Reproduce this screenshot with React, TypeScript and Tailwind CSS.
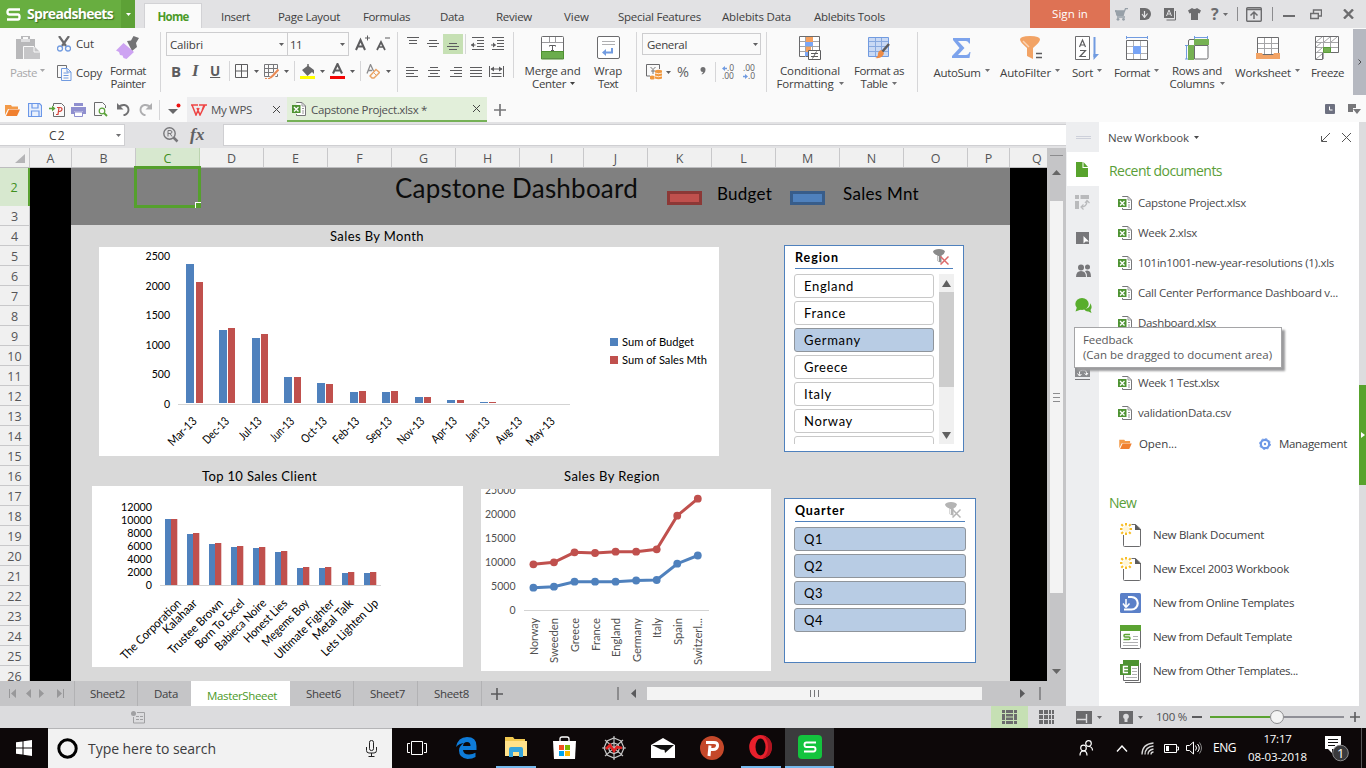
import { useLayoutEffect, useRef } from "react";
import type { ReactNode } from "react";

/* Text that spreads its letters so that the run is exactly w pixels wide. */
function T({ w, className = "", children }: { w: number; className?: string; children: string }) {
  const ref = useRef<HTMLSpanElement>(null);
  useLayoutEffect(() => {
    const el = ref.current;
    if (!el) return;
    el.style.letterSpacing = "0px";
    const natural = el.getBoundingClientRect().width;
    el.style.letterSpacing = `${(w - natural) / children.length}px`;
  }, [w, children]);
  return (
    <span ref={ref} className={`inline-block shrink-0 whitespace-pre ${className}`}>
      {children}
    </span>
  );
}

function S({ w, h, className = "", children }: { w: number; h: number; className?: string; children: ReactNode }) {
  return (
    <svg width={w} height={h} viewBox={`0 0 ${w} ${h}`} fill="none" className={`block shrink-0 ${className}`}>
      {children}
    </svg>
  );
}

const Caret = ({ className = "" }: { className?: string }) => (
  <S w={5} h={3} className={className}>
    <path d="M0 0h5L2.5 3z" fill="currentColor" />
  </S>
);

const Rule = ({ className = "" }: { className?: string }) => <div className={`w-px shrink-0 bg-[#d6d6d8] ${className}`} />;

/* ---------- title bar ---------- */

const menuTabs: [string, number, string][] = [
  ["Insert", 29, "ml-[19px]"],
  ["Page Layout", 62, "ml-[28px]"],
  ["Formulas", 47, "ml-[23px]"],
  ["Data", 24, "ml-[30px]"],
  ["Review", 36, "ml-[32px]"],
  ["View", 25, "ml-[32px]"],
  ["Special Features", 83, "ml-[29px]"],
  ["Ablebits Data", 69, "ml-[21px]"],
  ["Ablebits Tools", 71, "ml-[23px]"],
];

function TitleBar() {
  return (
    <div className="flex h-7 shrink-0 bg-[#e2e2e4] text-[11.5px] text-[#404040]">
      <div className="flex h-7 w-[121px] items-center bg-[#68ae40]">
        <S w={15} h={13} className="ml-[6px]">
          <path d="M14 1.5H3.500Q1.500 1.500 1.500 4T3.500 6.500H12Q13.500 6.500 13.500 9T12 11.500H1" stroke="#fff" strokeWidth="2.400" />
        </S>
        <T w={86} className="ml-[6px] text-[14px] leading-[28px] font-bold text-white [text-shadow:1px_1px_1px_#3c6d22]">Spreadsheets</T>
      </div>
      <div className="flex h-7 w-[14px] items-center justify-center bg-[#5da136] text-white">
        <Caret />
      </div>
      <div className="mt-[3px] ml-[9px] flex h-[25px] w-[58px] justify-center border border-b-0 border-[#d2d2d5] bg-[#fafafa]">
        <T w={31} className="text-[11.5px] leading-[26px] font-bold text-[#4b9a28]">Home</T>
      </div>
      {menuTabs.map(([name, w, gap]) => (
        <div key={name} className={`${gap} pt-[3px]`}>
          <T w={w} className="leading-[28px]">{name}</T>
        </div>
      ))}
      <div className="ml-[145px] flex h-7 w-[80px] justify-center bg-[#de7254] text-white">
        <T w={36} className="leading-[28px]">Sign in</T>
      </div>
      <div className="flex h-7 items-center text-[#6c6c6e]">
        <S w={13} h={13} className="ml-[5px]">
          <path d="M0 3h1l1 4.500M2 9h8" stroke="#97a0a8" strokeWidth="1.300" />
          <path d="M0 3h9.500L10.500.7H13" stroke="#97a0a8" strokeWidth="1.300" />
          <path d="M.5 3h9.500L8.700 8H2z" fill="#97a0a8" />
          <circle cx="3" cy="11.300" r="1.400" fill="#97a0a8" />
          <circle cx="8.500" cy="11.300" r="1.400" fill="#97a0a8" />
        </S>
        <S w={11} h={12} className="ml-[12px]">
          <path d="M0 0h5a6 6 0 010 12H0z" fill="currentColor" />
          <path d="M4.500 10V3M4.500 9.500L2 6M4.500 9.500l3-4" stroke="#e2e2e4" strokeWidth="1.200" />
        </S>
        <S w={12} h={13} className="ml-[13px]">
          <path d="M2.500 12h9V3" stroke="currentColor" />
          <path d="M0 0h10v10H0z" fill="currentColor" />
          <path d="M2.500 8L5 2l2.500 6M3.500 6h3" stroke="#e2e2e4" />
        </S>
        <S w={13} h={12} className="ml-[12px]">
          <path d="M4 0q2.500 2 5 0l4 2.500-1.500 3L10 5v7H3V5l-1.500.5L0 2.500z" fill="currentColor" />
        </S>
        <span className="ml-[10px] w-[8px] text-[16px] leading-7 font-bold">?</span>
        <Caret className="ml-[4px]" />
        <div className="ml-[9px] h-[14px] w-px bg-[#8c8c8e]" />
        <S w={16} h={15} className="ml-[8px]">
          <rect x=".7" y=".7" width="14.600" height="13.600" rx="1" stroke="currentColor" strokeWidth="1.400" />
          <path d="M1 2.500h14M8 12V5.500M4.500 8.500L8 5l3.500 3.500" stroke="currentColor" strokeWidth="1.500" />
        </S>
        <div className="ml-[10px] h-[14px] w-px bg-[#8c8c8e]" />
        <S w={12} h={14} className="ml-[10px]">
          <path d="M0 9h12" stroke="currentColor" strokeWidth="2" />
        </S>
        <S w={12} h={11} className="ml-[15px]">
          <path d="M3.500 4V1H11.500V7H8.500M.7 4.500h7.600v5H.7z" stroke="currentColor" strokeWidth="1.400" />
        </S>
        <S w={11} h={10} className="ml-[21px]">
          <path d="M1 .5L10 9.500M10 .5L1 9.500" stroke="currentColor" strokeWidth="2.400" />
        </S>
      </div>
    </div>
  );
}

/* ---------- ribbon ---------- */

function Lines({ ys, xs, w = 12, h = 10, className = "" }: { ys: number[]; xs: [number, number][]; w?: number; h?: number; className?: string }) {
  return (
    <S w={w} h={h} className={className}>
      {ys.map((y, i) => (
        <path key={y} d={`M${xs[i][0]} ${y}.5H${xs[i][1]}`} stroke="#5c5c5e" />
      ))}
    </S>
  );
}

function Big({ icon, lines, widths, gap, caret = true, box }: { icon: ReactNode; lines: string[]; widths: number[]; gap: string; caret?: boolean; box: string }) {
  return (
    <div className={`flex shrink-0 flex-col items-center ${gap} ${box}`}>
      <div className="flex h-[26px] items-start justify-center">{icon}</div>
      <div className={lines.length > 1 ? "mt-[2px] flex flex-col items-center" : "mt-[4px] flex flex-col items-center"}>
        {lines.map((l, i) => (
          <div key={l} className="flex h-[13px] items-center">
            <T w={widths[i]} className="leading-[13px]">{l}</T>
            {caret && i === lines.length - 1 && <Caret className={lines.length > 1 ? "ml-[5px] text-[#707072]" : "mb-[5px] ml-[4px] text-[#707072]"} />}
          </div>
        ))}
      </div>
    </div>
  );
}

function Ribbon() {
  const full: [number, number] = [0, 12];
  const mid: [number, number] = [2, 10];
  return (
    <div className="flex h-[69px] shrink-0 bg-[#fafafa] text-[11.5px] text-[#404040]">
      <div className="flex w-[160px] pt-[8px]">
        <div className="ml-[10px] w-[38px] text-[#a8a8aa]">
          <S w={25} h={24} className="ml-[6px]">
            <path d="M0 3h5V0h9v3h5v8h-8v12H0z" fill="#b8b8ba" />
            <path d="M5 3h9v3H5z" fill="#dedee0" />
            <path d="M7 1h5v2H7z" fill="#fafafa" />
            <path d="M8 11h11l5 5v7H8z" fill="#c6c6c8" />
            <path d="M18 11v5h6M7.500 23V10.500H18" stroke="#fafafa" />
          </S>
          <div className="mt-[6px] flex items-center">
            <T w={27} className="leading-[13px]">Paste</T>
            <Caret className="mb-[5px] ml-[3px]" />
          </div>
        </div>
        <div className="ml-[9px]">
          <div className="flex h-4 items-center">
            <S w={14} h={16}>
              <path d="M2 0l7 10M12 0L5 10" stroke="#6b6b6d" strokeWidth="2.200" />
              <circle cx="3" cy="12.500" r="2.500" stroke="#719be0" strokeWidth="1.300" />
              <circle cx="11" cy="12.500" r="2.500" stroke="#719be0" strokeWidth="1.300" />
            </S>
            <T w={18} className="ml-[5px] leading-4">Cut</T>
          </div>
          <div className="mt-[13px] flex h-4 items-center">
            <S w={15} h={16}>
              <path d="M4 12.500H.5V.5h9V3" stroke="#707072" />
              <path d="M4.500 3.500h6l3.500 3.500v8.500H4.500z" fill="#fafafa" stroke="#719be0" />
              <path d="M10 3.500V7h4M6.500 8h5M6.500 10.500h5M6.500 13h5" stroke="#719be0" />
            </S>
            <T w={26} className="ml-[4px] leading-4">Copy</T>
          </div>
        </div>
        <div className="ml-[8px] flex flex-col items-center">
          <S w={24} h={24}>
            <path d="M11 5l4-.5L17.500 0 23 2l-3 5 1 4-5 4z" fill="#737375" />
            <path d="M7.500 7l10.500 9-7.500 7-3-1-1-2.500-2.500-.5-1-3-3-1.500z" fill="#cda3f2" />
          </S>
          <T w={36} className="mt-[4px] leading-[13px]">Format</T>
          <T w={35} className="leading-[13px]">Painter</T>
        </div>
      </div>
      <Rule className="mt-[4px] h-[60px]" />
      <div className="w-[236px] pt-[4px] pl-[5px]">
        <div className="flex h-[24px]">
          <div className="flex h-[24px] w-[122px] items-center border border-[#cdcdcf] pl-[3px]">
            <T w={33} className="pt-px">Calibri</T>
            <Caret className="ml-[76px] text-[#606062]" />
          </div>
          <div className="flex h-[24px] w-[61px] items-center border border-l-0 border-[#cdcdcf] pl-[2px]">
            <T w={12} className="pt-px">11</T>
            <Caret className="ml-[38px] text-[#606062]" />
          </div>
          <S w={15} h={16} className="mt-[3px] ml-[6px]">
            <path d="M1 15L5.500 5 10 15M2.500 11.500h6" stroke="#5c5c5e" strokeWidth="2" />
            <path d="M10 3h5M12.500.5v5" stroke="#5c5c5e" />
          </S>
          <S w={14} h={16} className="mt-[3px] ml-[6px]">
            <path d="M1 15L5 7l4 8M2.500 12h5" stroke="#5c5c5e" strokeWidth="1.700" />
            <path d="M9 3h5" stroke="#5c5c5e" />
          </S>
        </div>
        <div className="mt-[5px] flex h-[20px] items-center text-[#5c5c5e]">
          <span className="ml-[5px] w-[14px] text-[15px] leading-5 font-bold">B</span>
          <span className="ml-[7px] w-[10px] font-['Liberation_Serif'] text-[17px] leading-5 font-bold italic">I</span>
          <span className="ml-[8px] w-[12px] text-[13.5px] leading-5 font-bold underline">U</span>
          <Rule className="ml-[7px] h-[20px]" />
          <S w={14} h={14} className="ml-[5px]">
            <path d="M.5.5h12v13H.5zM6.500 1v12M1 7h12" stroke="currentColor" />
          </S>
          <Caret className="ml-[5px]" />
          <S w={15} h={15} className="ml-[5px]">
            <path d="M.5.5h13v12H.5zM4.500 1v12M9.500 1v12M1 4.500h13M1 8.500h13" stroke="#77777a" />
            <path d="M14.500 6L9 12l-2 2" stroke="#fafafa" strokeWidth="4" />
            <path d="M14.500 5.500L9 11.500l-3 2.500" stroke="#e98a55" strokeWidth="2.200" />
            <path d="M1 14.500h6" stroke="#e98a55" strokeDasharray="2 1" />
          </S>
          <Caret className="ml-[5px]" />
          <Rule className="ml-[5px] h-[20px]" />
          <S w={15} h={15} className="ml-[5px]">
            <path d="M2 6l6-4.500L14 6v4l-2-2-4.500 4z" fill="#68686a" />
            <path d="M8 0v4" stroke="#68686a" strokeWidth="1.500" />
            <path d="M0 12h15v3H0z" fill="#ffff00" />
          </S>
          <Caret className="ml-[5px]" />
          <S w={15} h={16} className="ml-[5px]">
            <path d="M3 10.500L7.500 1 12 10.500M4.500 7.500h6" stroke="#5c5c5e" strokeWidth="2.100" />
            <path d="M0 13h15v3H0z" fill="#f30505" />
          </S>
          <Caret className="ml-[5px]" />
          <Rule className="ml-[5px] h-[20px]" />
          <S w={14} h={15} className="ml-[5px]">
            <path d="M1 9.500L4.500.5 7.500 7M2 6.500h4" stroke="#8b8b8d" strokeWidth="1.300" />
            <path d="M10 5.500l3.500 3L8 14H6l-2-2z" stroke="#eaa363" strokeWidth="1.400" />
            <path d="M7.500 8.500l3 3" stroke="#eaa363" />
          </S>
          <Caret className="ml-[6px]" />
        </div>
      </div>
      <Rule className="mt-[4px] h-[60px]" />
      <div className="w-[115px] pt-[6px]">
        <div className="flex h-[20px]">
          <Lines ys={[0, 3, 6]} xs={[full, mid, mid]} className="mt-[3px] ml-[9px]" />
          <Lines ys={[0, 3, 6]} xs={[mid, full, mid]} className="mt-[6px] ml-[8px]" />
          <div className="ml-[4px] h-[20px] w-[20px] bg-[#c6e0b4] pt-[9px] pl-[4px]">
            <Lines ys={[0, 3, 6]} xs={[mid, full, mid]} />
          </div>
          <Rule className="ml-[2px] h-[20px]" />
          <S w={13} h={13} className="mt-[3px] ml-[5px]">
            <path d="M1 .5h12M6 3.500h7M6 6.500h7M6 9.500h7M1 12.500h12M0 8h4.500" stroke="#5c5c5e" />
            <path d="M0 8l3-2.500v5z" fill="#5c5c5e" />
          </S>
          <S w={13} h={13} className="mt-[3px] ml-[7px]">
            <path d="M1 .5h12M6 3.500h7M6 6.500h7M6 9.500h7M1 12.500h12M0 8h4.500" stroke="#5c5c5e" />
            <path d="M5 8L2 5.500v5z" fill="#5c5c5e" />
          </S>
        </div>
        <div className="mt-[12px] flex h-[13px]">
          <Lines ys={[0, 3, 6, 9]} xs={[[0, 8], full, [0, 8], full]} className="mt-[1px] ml-[8px]" />
          <Lines ys={[0, 3, 6, 9]} xs={[mid, full, mid, full]} className="mt-[1px] ml-[10px]" />
          <Lines ys={[0, 3, 6, 9]} xs={[[4, 12], full, [4, 12], full]} className="mt-[1px] ml-[10px]" />
          <Lines ys={[0, 3, 6, 9]} xs={[full, full, full, full]} className="mt-[1px] ml-[8px]" />
          <S w={15} h={12} className="ml-[7px]">
            <path d="M.5 0v11M14.500 0v11M2 3h11M2.500 7.500h10M2.500 10.500h10" stroke="#5c5c5e" />
            <path d="M1.500 3L5 .5v5zM13.500 3L10 .5v5z" fill="#5c5c5e" />
          </S>
        </div>
      </div>
      <Rule className="mt-[4px] h-[46px]" />
      <div className="flex w-[122px] pt-[8px]">
        <div className="ml-[10px] flex w-[57px] flex-col items-center">
          <S w={23} h={24}>
            <rect x=".5" y=".5" width="22" height="22" rx="1" fill="#fff" stroke="#6b6b6d" />
            <path d="M1 6.500h21M8.500 1v5M14.500 1v5" stroke="#9b9b9d" />
            <path d="M8.500 10.500v-1h6v1M11.500 9.500v5M10 14.500h3" stroke="#5c5c5e" />
            <path d="M1 16h21v6.500H1z" fill="#6bad4d" />
            <path d="M.5 15.500h22v7.500H.5z" stroke="#4e9230" />
          </S>
          <T w={56} className="mt-[4px] leading-[13px]">Merge and</T>
          <div className="flex items-center self-start pl-[8px]">
            <T w={34} className="leading-[13px]">Center</T>
            <Caret className="ml-[4px]" />
          </div>
        </div>
        <div className="ml-[12px] flex w-[30px] flex-col items-center">
          <S w={23} h={24}>
            <rect x=".5" y=".5" width="22" height="22" rx="1.500" fill="#fff" stroke="#6b6b6d" />
            <path d="M5 5.500h13M5 8.500h13" stroke="#b0b0b2" />
            <path d="M15 12v4.500H8" stroke="#719be0" strokeWidth="2" />
            <path d="M9 13v7l-4-3.500z" fill="#719be0" />
          </S>
          <T w={28} className="mt-[4px] leading-[13px]">Wrap</T>
          <T w={20} className="leading-[13px]">Text</T>
        </div>
      </div>
      <Rule className="mt-[4px] h-[60px]" />
      <div className="w-[129px] pt-[5px] pl-[5px]">
        <div className="flex h-[22px] w-[119px] items-center border border-[#cdcdcf] pl-[4px]">
          <T w={40} className="pt-px">General</T>
          <Caret className="ml-[66px] text-[#606062]" />
        </div>
        <div className="mt-[7px] flex h-[20px] items-center text-[#606062]">
          <S w={16} h={16} className="ml-[4px]">
            <path d="M4 12H.5V.5h13V5" stroke="#6b6b6d" />
            <path d="M4.500 3L7 5.500 9.500 3M7 5.500V10M5 7h4" stroke="#6b6b6d" strokeWidth=".9" />
            <path d="M9 6.500q3.500-1.500 7 0v8q-3.500 1.500-7 0zM4 12q2-1 4.500 0v3q-2 1-4.500 0z" fill="#f0973c" />
            <path d="M9 9q3.500 1.500 7 0M9 12q3.500 1.500 7 0" stroke="#fff" strokeWidth=".8" />
          </S>
          <Caret className="ml-[4px]" />
          <span className="ml-[6px] w-[14px] text-[14.5px] leading-5">%</span>
          <S w={6} h={8} className="mb-[2px] ml-[9px]">
            <path d="M3 0a2.500 2.500 0 012.500 2.500Q5.500 6 2 7.500L1.500 7Q3 6 3 5a2.500 2.500 0 010-5z" fill="#707072" />
          </S>
          <Rule className="ml-[9px] h-[20px]" />
          <div className="ml-[5px] flex w-[13px] flex-col items-end text-[8.5px] leading-[8px]">
            <div className="flex h-[8px] items-center">
              <S w={5} h={5}>
                <path d="M0 2.500L3 0v1.800h2v1.500H3V5z" fill="#719be0" />
              </S>
              <T w={7}>.0</T>
            </div>
            <T w={12}>.00</T>
          </div>
          <div className="ml-[8px] flex w-[13px] flex-col items-end text-[8.5px] leading-[8px]">
            <T w={12}>.00</T>
            <div className="flex h-[8px] items-center">
              <S w={5} h={5}>
                <path d="M5 2.500L2 0v1.800H0v1.500h2V5z" fill="#719be0" />
              </S>
              <T w={7}>.0</T>
            </div>
          </div>
        </div>
      </div>
      <Rule className="mt-[4px] h-[60px]" />
      <div className="flex w-[150px] pt-[8px]">
        <Big box="w-[68px]" gap="ml-[9px]" lines={["Conditional", "Formatting"]} widths={[60, 57]} icon={
          <S w={22} h={24}>
            <path d="M.5.5h20v20H.5z" fill="#fff" stroke="#6b6b6d" />
            <path d="M6.500 1v20M13.500 1v20M1 5.500h19M1 10.500h19M1 15.500h19" stroke="#a5a5a7" />
            <path d="M7 1h7v5H7zM7 11h5v5H7z" fill="#f5a05e" />
            <path d="M6 6h8v4H6zM6 16h4v4H6z" fill="#7ba6f5" />
            <path d="M9.500 14.500h12v9h-12z" fill="#fff" stroke="#5c5c5e" />
            <path d="M12 17.500h7M12 20.500h7M13.500 22.500l4-7" stroke="#5c5c5e" />
          </S>
        } />
        <Big box="w-[54px]" gap="ml-[8px]" lines={["Format as", "Table"]} widths={[50, 27]} icon={
          <S w={23} h={24}>
            <path d="M.5 1.500h20v19H.5z" fill="#c9d9f4" stroke="#719be0" />
            <path d="M1 5.500h19M1 10.500h19M1 15.500h19M7.500 2v18M13.500 2v18" stroke="#88a9df" />
            <path d="M21 8l-7 8" stroke="#5c5c5e" strokeWidth="2.500" />
            <path d="M13 14l3 3q-1 6-9 5 3-1 3-4 0-3 3-4z" fill="#ee8b45" />
          </S>
        } />
      </div>
      <Rule className="mt-[4px] h-[60px]" />
      <div className="flex w-[435px] pt-[8px]">
        <Big box="w-[57px]" gap="ml-[15px]" lines={["AutoSum"]} widths={[47]} icon={
          <S w={19} h={24}>
            <path d="M1 2h17v5.500h-1Q16.500 5 14 5H6l6.500 7L6 19h8q2.500 0 3.500-3h1l-1 6H0v-2l7.500-8L1 4z" fill="#7da3ec" />
          </S>
        } />
        <Big box="w-[60px]" gap="ml-[10px]" lines={["AutoFilter"]} widths={[51]} icon={
          <S w={23} h={24}>
            <path d="M1 3.500Q1 0 11 0t10 3.500Q21 6 14 12v11l-6-3v-8Q1 6 1 3.500z" fill="#f2a365" />
            <path d="M4 5l6 6" stroke="#fad4b5" strokeWidth="1.500" />
            <path d="M17 17.500h6M17 21.500h6" stroke="#5c5c5e" strokeWidth="1.500" />
          </S>
        } />
        <Big box="w-[30px]" gap="ml-[12px]" lines={["Sort"]} widths={[21]} icon={
          <S w={24} h={25}>
            <path d="M.5.500h14v23H.5z" fill="#fff" stroke="#6b6b6d" />
            <path d="M4.500 11L7.500 4l3 7M5.500 9h4M5 14.500h5.500L5 20.500H11" stroke="#5c5c5e" strokeWidth="1.200" />
            <path d="M19.500 1v20" stroke="#719be0" strokeWidth="2" />
            <path d="M18.500 18H24l-5.500 6z" fill="#719be0" />
          </S>
        } />
        <Big box="w-[45px]" gap="ml-[12px]" lines={["Format"]} widths={[36]} icon={
          <S w={22} h={24}>
            <path d="M0 1.500h22M.5 0v3M21.500 0v3" stroke="#719be0" />
            <path d="M.5 4.500h21v19H.5z" fill="#fff" stroke="#6b6b6d" />
            <path d="M7.500 5v18M14.500 5v18M1 10.500h20M1 17.500h20" stroke="#b0b0b2" />
            <path d="M7 10h8v8H7z" fill="#78a4f5" />
          </S>
        } />
        <Big box="w-[54px]" gap="ml-[11px]" lines={["Rows and", "Columns"]} widths={[50, 45]} icon={
          <S w={24} h={24}>
            <path d="M9 1.500h14M9.500 0v3M22.500 0v3M1.500 9v14M0 9.500h3M0 23h3" stroke="#719be0" />
            <path d="M9 3.500H5Q3.500 3.500 3.500 5v4" stroke="#6b6b6d" />
            <path d="M9.500 9.500h13.500v12q0 1.500-1.500 1.500h-12z" fill="#fff" stroke="#6b6b6d" />
            <path d="M9 3h15v6H9zM3 9h6v15H3z" fill="#76b153" />
          </S>
        } />
        <Big box="w-[65px]" gap="ml-[11px]" lines={["Worksheet"]} widths={[56]} icon={
          <S w={24} h={24}>
            <path d="M1.500 1.500h21v17h-21z" fill="#fff" stroke="#6b6b6d" />
            <path d="M8.500 2v16M15.500 2v16M2 7.500h20M2 12.500h20" stroke="#a5a5a7" />
            <path d="M0 17h6l1 2h10l1-2h6v6H0z" fill="#f2a365" />
          </S>
        } />
        <Big box="w-[33px]" gap="ml-[11px]" caret={false} lines={["Freeze"]} widths={[33]} icon={
          <S w={25} h={24}>
            <path d="M.5.5h23v16h-16v7h-7z" fill="#fff" stroke="#6b6b6d" />
            <path d="M8.500 1v22M15.500 1v16M1 6.500h22M1 11.500h22M1 16.500h8M1 6l6-5M9 6l6-5M16 6l6-5M1 11l6-5M1 17l6-5M1 23l6-5" stroke="#a5a5a7" />
            <path d="M8.500 11.500h7v5h-7z" fill="#76b153" stroke="#5a9a3a" />
          </S>
        } />
      </div>
      <div className="mt-[1px] ml-auto flex h-[66px] w-[13px] shrink-0 items-center justify-center bg-[#b5b8c0]">
        <S w={4} h={6}>
          <path d="M.5.5L3 3 .5 5.500" stroke="#4d4d50" />
        </S>
      </div>
    </div>
  );
}

/* ---------- document tabs ---------- */

const XlsIcon = ({ className = "" }: { className?: string }) => (
  <S w={14} h={14} className={className}>
    <path d="M4.500 1V.5h5.500l3.500 3.500v9.500h-9V12" fill="#fff" stroke="#77777a" />
    <path d="M10 .5V4h3.500M10 6.500h2M10 9h2M10 11h2" stroke="#9a9a9c" />
    <path d="M0 3h8.500v8H0z" fill="#4e9333" />
    <path d="M2 5l4.500 4.500M6.500 5L2 9.500" stroke="#fff" strokeWidth="1.300" />
  </S>
);

const FolderIcon = ({ w, h, className = "" }: { w: number; h: number; className?: string }) => (
  <svg width={w} height={h} viewBox="0 0 15 12" className={`block shrink-0 ${className}`}>
    <path d="M0 1h6l1 1.500h6V5H3L0 11z" fill="#f39a48" />
    <path d="M4 5.500h11L12 12H1z" fill="#f08030" />
  </svg>
);

const CloseX = ({ className = "" }: { className?: string }) => (
  <S w={7} h={7} className={className}>
    <path d="M0 0l7 7M7 0L0 7" stroke="#444" />
  </S>
);

function DocTabs() {
  return (
    <div className="flex h-[25px] shrink-0 items-center bg-[#fafafa] text-[11.5px] text-[#505052]">
      <FolderIcon w={15} h={12} className="ml-[5px]" />
      <S w={14} h={14} className="ml-[8px]">
        <path d="M.5.500h11L13.500 2.500v11H.5z" fill="#eaf1fd" stroke="#6b97e8" strokeWidth="1.200" />
        <path d="M4 .5v4.500h6V.5M3.500 13.500V8h7.500v5.500" stroke="#6b97e8" strokeWidth="1.200" />
      </S>
      <S w={16} h={14} className="ml-[7px]">
        <path d="M4.500 3V.5h8l3 3v10h-11V9" stroke="#6b6b6d" />
        <path d="M7 11.500h2l1-7M8 4.500h3q2 0 2 1.800T10.500 8.500L9 8.500" stroke="#d5433a" strokeWidth="1.200" />
        <path d="M0 5.500h4" stroke="#5ba23a" strokeWidth="1.600" />
        <path d="M3 2.500l3.500 3L3 8.500z" fill="#5ba23a" />
      </S>
      <S w={15} h={14} className="ml-[6px]">
        <path d="M3 0h9v3H3zM0 4h15v7h-3V8.500H3V11H0z" fill="#8f8fcf" />
        <path d="M3.500 9h8v4.500h-8z" fill="#fff" stroke="#8f8fcf" />
      </S>
      <S w={14} h={15} className="ml-[8px]">
        <path d="M8 13.500H.5V.5h8l3 3V6" stroke="#6b6b6d" />
        <circle cx="8" cy="9" r="2.800" stroke="#5ba23a" strokeWidth="1.200" />
        <path d="M10 11l3 3" stroke="#5ba23a" strokeWidth="1.800" />
      </S>
      <S w={13} h={13} className="ml-[9px]">
        <path d="M1 5Q3.500 1.500 7.500 2 11.500 3 11.500 7 11.300 11 6.500 12.500" stroke="#707072" strokeWidth="1.900" />
        <path d="M0 0v6.500h6.500z" fill="#707072" />
      </S>
      <S w={13} h={13} className="ml-[9px]">
        <path d="M12 5Q9.500 1.500 5.500 2 1.500 3 1.500 7 1.700 11 6.500 12.500" stroke="#aeaeb0" strokeWidth="1.900" />
        <path d="M13 0v6.500H6.500z" fill="#aeaeb0" />
      </S>
      <Rule className="ml-[7px] h-[20px]" />
      <S w={13} h={14} className="ml-[8px]">
        <path d="M0 6h10L5 11z" fill="#68686a" />
        <circle cx="10.500" cy="2.500" r="2" fill="#e11" />
      </S>
      <div className="ml-[6px] flex h-[25px] w-[100px] items-center bg-[#ededef]">
        <S w={16} h={12} className="ml-[4px]">
          <path d="M0 1h7M1 1l4 10 3-7M6 4l3 7 5-10M8 1h8M11 7l2-6" stroke="#ee4444" strokeWidth="1.500" />
        </S>
        <T w={41} className="ml-[4px] pt-px">My WPS</T>
        <CloseX className="ml-[21px]" />
      </div>
      <div className="flex h-[25px] w-[200px] items-center border-b-2 border-[#76b157] bg-[#e2efda]">
        <XlsIcon className="ml-[5px]" />
        <T w={116} className="mt-[2px] ml-[5px]">Capstone Project.xlsx *</T>
        <CloseX className="ml-[46px]" />
      </div>
      <S w={12} h={12} className="ml-[7px]">
        <path d="M6 0v12M0 6h12" stroke="#77777a" strokeWidth="1.700" />
      </S>
      <S w={10} h={10} className="mb-[2px] ml-auto">
        <rect width="10" height="10" rx="1" fill="#6d7080" />
        <path d="M4.500 2.500v3.500h3" stroke="#fff" />
      </S>
      <S w={13} h={10} className="mr-[5px] mb-[2px] ml-[13px]">
        <path d="M0 0h8v4H5v4H0zM5 5h8L9 10z" fill="#77777a" />
      </S>
    </div>
  );
}

function FormulaBar() {
  return (
    <div className="flex h-[26px] shrink-0 bg-[#e2e2e4] pt-[2px]">
      <div className="flex h-[22px] w-[125px] items-center border border-l-0 border-[#cfcfd2] bg-white">
        <T w={17} className="ml-[49px] pt-px text-[12px] text-[#404040]">C2</T>
        <Caret className="ml-[50px] text-[#707072]" />
      </div>
      <S w={16} h={16} className="mt-[3px] ml-[38px]">
        <circle cx="6.500" cy="6.500" r="5.700" stroke="#77777a" strokeWidth="1.400" />
        <path d="M10.500 10.500l4 4" stroke="#77777a" strokeWidth="2.500" />
        <path d="M5 9.500v-6h2q2 0 2 1.500T7 6.500H5M7 6.500l2 3" stroke="#77777a" />
      </S>
      <span className="ml-[11px] w-[15px] font-['Liberation_Serif'] text-[17.5px] leading-[21px] font-bold text-[#606062] italic">fx</span>
      <div className="ml-auto h-[22px] w-[843px] border border-r-0 border-[#cfcfd2] bg-white" />
    </div>
  );
}

/* ---------- sheet ---------- */

const columns = ["B", "C", "D", "E", "F", "G", "H", "I", "J", "K", "L", "M", "N", "O"];
const rows = Array.from({ length: 24 }, (_, i) => i + 3);

const BLUE = "#4f81bd";
const RED = "#c0504d";

function Label({ x, y, len, text, anchor = "end", rotate, size = 11.5, fill = "#000" }: { x: number; y: number; len: number; text: string; anchor?: "start" | "end"; rotate?: number; size?: number; fill?: string }) {
  return (
    <text
      x={x}
      y={y}
      textAnchor={anchor}
      textLength={len}
      lengthAdjust="spacingAndGlyphs"
      transform={rotate ? `rotate(${rotate} ${x} ${y})` : undefined}
      fontSize={size}
      fill={fill}
      className="font-[Lato,sans-serif]"
    >
      {text}
    </text>
  );
}

const months: [string, number, number, number, number, number][] = [
  ["Mar-13", 35, 186, 264, 196, 282],
  ["Dec-13", 32, 219, 330, 228, 328],
  ["Jul-13", 27, 252, 338, 261, 334],
  ["Jun-13", 29, 284, 377, 294, 377],
  ["Oct-13", 31, 317, 383, 326, 384],
  ["Feb-13", 32, 350, 392, 359, 391],
  ["Sep-13", 31, 382, 392, 391, 391],
  ["Nov-13", 33, 415, 397, 424, 397],
  ["Apr-13", 31, 447, 400, 457, 400],
  ["Jan-13", 29, 480, 402, 489, 402],
  ["Aug-13", 32, 513, 403, 522, 403],
  ["May-13", 35, 545, 403, 555, 403],
];

function MonthChart() {
  return (
    <svg width="620" height="209" viewBox="99 247 620 209" className="absolute top-[79px] left-[69px] block bg-white">
      {[2500, 2000, 1500, 1000, 500, 0].map((v, i) => (
        <Label key={v} x={170} y={260 + i * 29.6} len={String(v).length * 6.1} text={String(v)} />
      ))}
      <path d="M178 404.500H570" stroke="#d3d3d3" />
      {months.map(([name, len, bx, by, rx, ry], i) => (
        <g key={name}>
          <rect x={bx} y={by} width="8" height={403 - by} fill={BLUE} />
          <rect x={rx} y={ry} width="7" height={403 - ry} fill={RED} />
          <Label x={197.500 + i * 32.550} y={422} len={len} text={name} rotate={-45} size={12} />
        </g>
      ))}
      <rect x="610" y="338" width="8" height="8" fill={BLUE} />
      <rect x="610" y="356" width="8" height="8" fill={RED} />
      <Label x={622} y={346} len={72} text="Sum of Budget" anchor="start" />
      <Label x={622} y={364} len={85} text="Sum of Sales Mth" anchor="start" />
    </svg>
  );
}

const clients: [string, number, number, number, number, number][] = [
  ["The Corporation", 182, 80, 165, 519, 519],
  ["Kalahaar", 198, 43, 187, 534, 533],
  ["Trustee Brown", 224, 72, 209, 544, 543],
  ["Born To Excel", 245, 64, 231, 547, 546],
  ["Babieca Noire", 267, 67, 253, 548, 547],
  ["Honest Lies", 288, 56, 275, 552, 551],
  ["Megems Boy", 310, 61, 297, 568, 567],
  ["Ultimate Fighter", 335, 79, 319, 568, 567],
  ["Metal Talk", 354, 52, 342, 573, 572],
  ["Lets Lighten Up", 379, 75, 364, 573, 572],
];

function ClientChart() {
  return (
    <svg width="371" height="181" viewBox="92 486 371 181" className="absolute top-[318px] left-[62px] block bg-white">
      {[12000, 10000, 8000, 6000, 4000, 2000, 0].map((v, i) => (
        <Label key={v} x={152} y={511.300 + i * 13} len={String(v).length * 6.2} text={String(v)} />
      ))}
      {clients.map(([name, x, len, bx, b, r]) => (
        <g key={name}>
          <rect x={bx} y={b} width="6" height={585 - b} fill={BLUE} />
          <rect x={bx + 6} y={r} width="6.300" height={585 - r} fill={RED} />
          <Label x={x} y={604} len={len} text={name} rotate={-45} size={12} />
        </g>
      ))}
      <path d="M160 585.500H381" stroke="#d3d3d3" />
    </svg>
  );
}

const regions: [string, number, number, number][] = [
  ["Norway", 37, 564.3, 587.7],
  ["Sweeden", 45, 562.3, 586.7],
  ["Greece", 34, 552.3, 581.7],
  ["France", 33, 553, 581.7],
  ["England", 39, 551.7, 581.7],
  ["Germany", 44, 551.7, 580.5],
  ["Italy", 20, 549.3, 580],
  ["Spain", 27, 515.7, 563.7],
  ["Switzerl...", 47, 498.7, 555.5],
];

function RegionChart() {
  const px = (i: number) => 533.4 + i * 20.55;
  return (
    <svg width="290" height="182" viewBox="481 489 290 182" className="absolute top-[321px] left-[451px] block bg-white">
      {[25000, 20000, 15000, 10000, 5000, 0].map((v, i) => (
        <Label key={v} x={515.500} y={494 + i * 24} len={String(v).length * 6.1} text={String(v)} fill="#505050" />
      ))}
      <path d="M524 610.500H709" stroke="#d3d3d3" />
      <polyline points={regions.map((r, i) => `${px(i)},${r[2]}`).join(" ")} stroke={RED} strokeWidth="3" fill="none" />
      <polyline points={regions.map((r, i) => `${px(i)},${r[3]}`).join(" ")} stroke={BLUE} strokeWidth="3" fill="none" />
      {regions.map(([name, len, r, b], i) => (
        <g key={name}>
          <circle cx={px(i)} cy={r} r="3.900" fill={RED} />
          <circle cx={px(i)} cy={b} r="3.900" fill={BLUE} />
          <Label x={px(i) + 4.500} y={618} len={len} text={name} rotate={-90} fill="#505050" />
        </g>
      ))}
    </svg>
  );
}

const ClearFilter = ({ off = false, className = "" }: { off?: boolean; className?: string }) => (
  <S w={16} h={16} className={className}>
    <path d="M0 2.500Q1 0 6 0t6 2.500Q11.500 5 8.500 6.500V14l-4-2V6.500Q.5 5 0 2.500z" fill={off ? "#b4b4b4" : "#8a8a8a"} />
    <path d="M5.500 7v5" stroke="#fff" strokeWidth=".8" />
    <path d="M7.500 7.500l8 8M15.500 7.500l-8 8" stroke={off ? "#b4b4b4" : "#dd6a6a"} strokeWidth="1.500" />
  </S>
);

const regionItems: [string, number][] = [["England", 50], ["France", 42], ["Germany", 57], ["Greece", 44], ["Italy", 28], ["Norway", 49]];

function RegionSlicer() {
  return (
    <div className="absolute top-[77px] left-[754px] h-[207px] w-[180px] border border-[#4f81bd] bg-white font-[Lato,sans-serif] text-[13px] text-black">
      <div className="mr-[10px] ml-[10px] flex h-[23px] items-center justify-between border-b border-[#4f81bd]">
        <T w={44} className="pt-[2px] text-[12.500px] font-bold">Region</T>
        <ClearFilter className="mr-[4px]" />
      </div>
      <div className="mt-[5px] flex pl-[9px]">
        <div className="flex h-[170px] w-[140px] flex-col gap-[3px] overflow-hidden">
          {regionItems.map(([name, w]) => (
            <div
              key={name}
              className={`flex h-[24px] shrink-0 items-center rounded-[3px] border pt-[2px] pl-[9px] ${name === "Germany" ? "border-[#8f959c] bg-[#b8cce4]" : "border-[#c8c8c8] bg-white"}`}
            >
              <T w={w}>{name}</T>
            </div>
          ))}
          <div className="h-[24px] shrink-0 rounded-[3px] border border-[#c8c8c8]" />
        </div>
        <div className="ml-[5px] flex h-[170px] w-[15px] flex-col items-center bg-[#f0f0f0]">
          <S w={9} h={7} className="mt-[6px]">
            <path d="M0 7h9L4.500 0z" fill="#606060" />
          </S>
          <div className="mt-[5px] h-[95px] w-[15px] bg-[#cdcdcd]" />
          <S w={9} h={7} className="mt-auto mb-[5px]">
            <path d="M0 0h9L4.500 7z" fill="#606060" />
          </S>
        </div>
      </div>
    </div>
  );
}

function QuarterSlicer() {
  return (
    <div className="absolute top-[330px] left-[754px] h-[165px] w-[192px] border border-[#4f81bd] bg-white font-[Lato,sans-serif] text-[13px] text-black">
      <div className="mr-[10px] ml-[10px] flex h-[23px] items-center justify-between border-b border-[#4f81bd]">
        <T w={50} className="pt-[2px] text-[12.500px] font-bold">Quarter</T>
        <ClearFilter off className="mr-[4px]" />
      </div>
      <div className="mt-[5px] flex flex-col gap-[3px] px-[9px]">
        {["Q1", "Q2", "Q3", "Q4"].map((q) => (
          <div key={q} className="flex h-[24px] items-center rounded-[3px] border border-[#8f959c] bg-[#b8cce4] pt-[2px] pl-[9px]">
            <T w={19}>{q}</T>
          </div>
        ))}
      </div>
    </div>
  );
}

const Caption = ({ place, w, children }: { place: string; w: number; children: string }) => (
  <div className={`absolute font-[Lato,sans-serif] text-[13px] leading-4 text-black ${place}`}>
    <T w={w}>{children}</T>
  </div>
);

function Sheet() {
  return (
    <div className="flex h-[533px] w-[1047px] flex-col">
      <div className="flex h-[20px] border-b border-[#bdbdbf] bg-[#f0f0f0] text-[12.5px] leading-[21px] text-[#555557]">
        <div className="flex w-[30px] justify-end border-r border-[#c8c8ca] pt-[6px] pr-[4px]">
          <S w={10} h={9}>
            <path d="M10 0v9H0z" fill="#b4b4b6" />
          </S>
        </div>
        <div className="w-[42px] border-r border-[#c8c8ca] text-center">A</div>
        {columns.map((c) => (
          <div
            key={c}
            className={`w-[64px] border-r text-center ${c === "C" ? "border-[#bcd4b0] bg-[#d7e8cf] text-[#3f8f1e]" : "border-[#c8c8ca]"}`}
          >
            {c}
          </div>
        ))}
        <div className="w-[42px] border-r border-[#c8c8ca] text-center">P</div>
        <div className="w-[37px] pl-[22px]">Q</div>
      </div>
      <div className="flex h-[513px]">
        <div className="h-[513px] w-[30px] overflow-hidden bg-[#f0f0f0] text-center text-[12.5px] text-[#555557]">
          <div className="h-[38px] border-r-2 border-[#5aa231] bg-[#d7e8cf] leading-[39px] text-[#3f8f1e]">2</div>
          {rows.map((r) => (
            <div key={r} className="h-[20px] border-r border-b border-[#c8c8ca] leading-[21px]">
              {r}
            </div>
          ))}
        </div>
        <div className="relative flex h-[513px] w-[1017px]">
          <div className="w-[41px] bg-black" />
          <div className="w-[939px] bg-[#d9d9d9]">
            <div className="h-[57px] bg-[#808080]" />
          </div>
          <div className="w-[37px] bg-black" />

          <div className="absolute top-[-2px] left-[104px] h-[42px] w-[67px] border-3 border-[#55a02d]">
            <div className="absolute right-[-3px] bottom-[-3px] h-[6px] w-[6px] border-t border-l border-white bg-[#55a02d]" />
          </div>
          <div className="absolute top-[3px] left-[365px] font-[Lato,sans-serif] text-[26px] leading-[34px] text-[#0c0c0c]">
            <T w={243}>Capstone Dashboard</T>
          </div>
          <div className="absolute top-[23px] left-[637px] h-[14px] w-[35px] border-3 border-[#8c3836] bg-[#c0504d]" />
          <div className="absolute top-[14px] left-[687px] font-[Lato,sans-serif] text-[17px] leading-6 text-black">
            <T w={55}>Budget</T>
          </div>
          <div className="absolute top-[23px] left-[760px] h-[14px] w-[35px] border-3 border-[#385d8a] bg-[#4f81bd]" />
          <div className="absolute top-[14px] left-[813px] font-[Lato,sans-serif] text-[17px] leading-6 text-black">
            <T w={76}>Sales Mnt</T>
          </div>
          <Caption place="top-[60px] left-[300px]" w={94}>Sales By Month</Caption>
          <Caption place="top-[300px] left-[172px]" w={115}>Top 10 Sales Client</Caption>
          <Caption place="top-[300px] left-[534px]" w={96}>Sales By Region</Caption>
          <MonthChart />
          <ClientChart />
          <RegionChart />
          <RegionSlicer />
          <QuarterSlicer />
        </div>
      </div>
    </div>
  );
}

function VerticalScroll() {
  return (
    <div className="flex h-[533px] w-[19px] flex-col items-center bg-[#c5c5c7]">
      <div className="mt-[7px] h-px w-[13px] bg-[#8c8c8e]" />
      <S w={9} h={5} className="mt-[14px]">
        <path d="M0 5h9L4.500 0z" fill="#666" />
      </S>
      <div className="mt-[26px] flex h-[392px] w-[13px] flex-col items-center justify-center gap-[3px] bg-[#f3f3f3]">
        <div className="h-px w-[7px] bg-[#8c8c8e]" />
        <div className="h-px w-[7px] bg-[#8c8c8e]" />
        <div className="h-px w-[7px] bg-[#8c8c8e]" />
      </div>
      <S w={9} h={5} className="mt-auto mb-[7px]">
        <path d="M0 0h9L4.500 5z" fill="#666" />
      </S>
    </div>
  );
}

function SheetTabs() {
  return (
    <div className="flex h-[25px] w-[1066px] items-center bg-[#c5c5c7] text-[11.5px] text-[#404042]">
      <S w={60} h={9} className="ml-[8px]">
        <path d="M1.500 0v9" stroke="#98989a" />
        <path d="M8 0v9L3 4.500zM23 0v9l-5-4.500zM31 0v9l5-4.500zM49 0v9l5-4.500z" fill="#98989a" />
        <path d="M55.500 0v9" stroke="#98989a" />
      </S>
      <div className="ml-[6px] h-[25px] w-px bg-[#b2b2b4]" />
      <T w={35} className="ml-[15px] leading-[29px]">Sheet2</T>
      <div className="ml-[12px] h-[25px] w-px bg-[#b2b2b4]" />
      <T w={24} className="ml-[16px] leading-[29px]">Data</T>
      <div className="ml-[13px] flex h-[25px] w-[99px] bg-white pl-[16px]">
        <T w={70} className="leading-[29px] text-[#4b9a28]">MasterSheeet</T>
      </div>
      <T w={35} className="ml-[16px] leading-[29px]">Sheet6</T>
      <div className="ml-[12px] h-[25px] w-px bg-[#b2b2b4]" />
      <T w={35} className="ml-[16px] leading-[29px]">Sheet7</T>
      <div className="ml-[12px] h-[25px] w-px bg-[#b2b2b4]" />
      <T w={35} className="ml-[16px] leading-[29px]">Sheet8</T>
      <div className="ml-[12px] h-[25px] w-px bg-[#b2b2b4]" />
      <S w={12} h={12} className="ml-[9px]">
        <path d="M6 0v12M0 6h12" stroke="#5a5a5c" strokeWidth="1.600" />
      </S>
      <div className="ml-[114px] h-[13px] w-[2px] bg-[#8c8c8e]" />
      <S w={5} h={9} className="ml-[12px]">
        <path d="M5 0v9L0 4.500z" fill="#5a5a5c" />
      </S>
      <div className="ml-[11px] flex h-[13px] w-[335px] items-center justify-center gap-[3px] bg-[#f3f3f3]">
        <div className="h-[7px] w-px bg-[#77777a]" />
        <div className="h-[7px] w-px bg-[#77777a]" />
        <div className="h-[7px] w-px bg-[#77777a]" />
      </div>
      <S w={5} h={9} className="ml-[38px]">
        <path d="M0 0v9l5-4.500z" fill="#5a5a5c" />
      </S>
      <div className="ml-[14px] h-[13px] w-[2px] bg-[#8c8c8e]" />
    </div>
  );
}

/* ---------- side panel ---------- */

const docs: [string, number][] = [
  ["Capstone Project.xlsx", 108],
  ["Week 2.xlsx", 59],
  ["101in1001-new-year-resolutions (1).xls", 196],
  ["Call Center Performance Dashboard v...", 200],
  ["Dashboard.xlsx", 78],
];

const olderDocs: [string, number][] = [
  ["Week 1 Test.xlsx", 81],
  ["validationData.csv", 93],
];

const DocRow = ({ name, w }: { name: string; w: number }) => (
  <div className="flex h-[30px] items-center">
    <XlsIcon />
    <T w={w} className="ml-[6px]">{name}</T>
  </div>
);

const BlankIcon = () => (
  <S w={21} h={24}>
    <path d="M3.500 12v10.500q0 1 1 1h15q1 0 1-1V6l-5-4.500h-4" fill="#fff" stroke="#6b6b6d" />
    <path d="M15 1v6h6z" fill="#5c5c5e" />
    <circle cx="6" cy="6" r="3" fill="#fff6d8" />
    <path d="M6 0v2.500M6 9.500V12M0 6h2.500M9.500 6H12M1.300 1.300L3 3M9 9l1.700 1.700M1.300 10.700L3 9M9 3l1.700-1.700" stroke="#f8be28" strokeWidth="2" />
  </S>
);

const news: [string, number, ReactNode][] = [
  ["New Blank Document", 111, <BlankIcon key="a" />],
  ["New Excel 2003 Workbook", 136, <BlankIcon key="b" />],
  ["New from Online Templates", 141, (
    <S key="c" w={21} h={20}>
      <rect width="21" height="20" rx="1.500" fill="#5b80c8" />
      <path d="M8 4h3.500a6 6 0 010 12.500H4" stroke="#fff" strokeWidth="2.200" />
      <path d="M6 14V6M6 14.500L3 10.500M6 14.500l3.500-4" stroke="#fff" strokeWidth="1.500" />
    </S>
  )],
  ["New from Default Template", 139, (
    <S key="d" w={21} h={24}>
      <rect x=".5" y=".5" width="20" height="23" rx="1" fill="#fff" stroke="#6b6b6d" />
      <path d="M0 0h21v6H0z" fill="#5ba332" />
      <path d="M10 9.500H5q-1 0-1 1.200T5 12h4q1 0 1 1.200T9 14.500H3.500" stroke="#5ba332" strokeWidth="1.400" />
      <path d="M13 11.500h5M13 14.500h5M3 17.500h15M3 20.500h15" stroke="#b0b0b2" />
    </S>
  )],
  ["New from Other Templates...", 145, (
    <S key="e" w={21} h={23}>
      <path d="M3.500.5h15v20h-15z" fill="#fff" stroke="#6b6b6d" />
      <path d="M5 22.500h15.500V3" stroke="#6b6b6d" />
      <path d="M3 0h16v6H3zM0 4h11v11H0z" fill="#4e9333" />
      <path d="M8 6.500H3.500v6H8M3.500 9.500H8" stroke="#fff" strokeWidth="1.400" />
      <path d="M12 8.500h5M12 11.500h5M6 17.500h11M12 14.500h5" stroke="#b0b0b2" />
    </S>
  )],
];

function IconStrip() {
  return (
    <div className="flex h-[584px] w-[33px] shrink-0 flex-col items-center bg-[#edeef0] pl-px">
      <div className="mt-[14px] flex h-[3px] w-[15px] flex-col justify-between">
        <div className="h-px bg-[#cdd0da]" />
        <div className="h-px bg-[#cdd0da]" />
      </div>
      <div className="mt-[13px] flex h-[34px] w-[32px] items-center justify-center bg-white pr-[2px]">
        <S w={12} h={15}>
          <path d="M0 0h6.500v6H12v9H0z" fill="#58a32d" />
          <path d="M7.500 0L12 5H7.500z" fill="#58a32d" />
        </S>
      </div>
      <S w={15} h={15} className="mt-[9px] mr-[2px]">
        <path d="M0 0h4v4H0zM5.500 0H14v4H5.500zM0 6h4v8H0z" fill="#b9babc" />
        <path d="M6 12q6 0 6-6M8.500 9.500L6 12l2.500 2.500M10 8l2-2.500L14.500 8" stroke="#b9babc" strokeWidth="1.200" />
      </S>
      <S w={13} h={12} className="mt-[22px] mr-[1px]">
        <path d="M0 0h13v12H0z" fill="#77777a" />
        <path d="M7.500 4v7.500l2-2H13z" fill="#fff" />
      </S>
      <S w={15} h={14} className="mt-[20px]">
        <circle cx="5" cy="3.500" r="3" fill="#77777a" />
        <circle cx="11.500" cy="3" r="2.500" fill="#77777a" />
        <path d="M0 13q0-6 5-6t5 6zM11 13q0-4-2-6 6-2 6 6z" fill="#77777a" />
      </S>
      <S w={17} h={15} className="mt-[20px]">
        <path d="M9 11q7-1 6-6 3 4 .5 7l1 3-3-1.500Q11 14 9 11z" fill="#58ad2d" />
        <ellipse cx="7" cy="6" rx="6.700" ry="6" fill="#58ad2d" />
        <path d="M2 9L.5 13.500 6 11.500z" fill="#58ad2d" />
      </S>
      <S w={15} h={15} className="mt-[53px] mr-[1px]">
        <path d="M0 0h15v11H0z" fill="#8a8b8e" />
        <path d="M0 13.500h15" stroke="#77777a" />
        <path d="M5 9.500Q3 4.500 7.500 4t4 4.500M2.500 7.500L4.500 10 6.500 8M9.500 7.500l2 1.500 1.500-2" stroke="#fff" />
      </S>
    </div>
  );
}

function SidePanel() {
  return (
    <div className="relative flex h-[584px] w-[300px] shrink-0">
      <IconStrip />
      <div className="h-[584px] w-[260px] bg-white text-[11.5px] text-[#4a4a4c]">
        <div className="flex h-[30px] items-center pl-[9px]">
          <T w={81} className="pt-[2px]">New Workbook</T>
          <Caret className="ml-[5px]" />
          <S w={9} h={9} className="ml-auto">
            <path d="M9 0L1 8M.5 3v5.500H6" stroke="#555" />
          </S>
          <S w={9} h={9} className="mr-[8px] ml-[12px]">
            <path d="M0 0l9 9M9 0L0 9" stroke="#555" />
          </S>
        </div>
        <div className="mt-[8px] pl-[10px]">
          <T w={113} className="text-[14px] leading-[22px] text-[#5a9e38]">Recent documents</T>
        </div>
        <div className="mt-[6px] pl-[19px]">
          {docs.map(([name, w]) => (
            <DocRow key={name} name={name} w={w} />
          ))}
        </div>
        <div className="mt-[30px] pl-[19px]">
          {olderDocs.map(([name, w]) => (
            <DocRow key={name} name={name} w={w} />
          ))}
        </div>
        <div className="mt-[1px] flex h-[30px] items-center pl-[20px] text-[#404042]">
          <FolderIcon w={13} h={10} />
          <T w={38} className="ml-[7px]">Open...</T>
          <S w={12} h={12} className="ml-[82px]">
            <circle cx="6" cy="6" r="4.200" stroke="#6d98e6" strokeWidth="2.200" />
            <circle cx="6" cy="6" r="5.400" stroke="#6d98e6" strokeDasharray="2 2.200" />
            <circle cx="6" cy="6" r="1.200" fill="#6d98e6" />
          </S>
          <T w={68} className="ml-[8px]">Management</T>
        </div>
        <div className="mt-[33px] pl-[10px]">
          <T w={27} className="text-[14px] leading-[22px] text-[#5a9e38]">New</T>
        </div>
        <div className="mt-[4px] pl-[21px] text-[#404042]">
          {news.map(([name, w, icon]) => (
            <div key={name} className="flex h-[34px] items-center">
              {icon}
              <T w={w} className="ml-[12px]">{name}</T>
            </div>
          ))}
        </div>
      </div>
      <div className="h-[584px] w-[7px] bg-[#dcdcde] pt-[263px]">
        <div className="flex h-[100px] w-[7px] items-center justify-end bg-[#58a32d] pr-[1px]">
          <S w={4} h={6}>
            <path d="M0 0v6l4-3z" fill="#fff" />
          </S>
        </div>
      </div>
      <div className="absolute top-[205px] left-[8px] h-[41px] w-[208px] border border-[#a5a5a7] bg-white pt-[4px] pl-[8px] text-[11.5px] leading-[15px] text-[#5a5a5c] shadow-[3px_3px_2px_#9b9b9d]">
        <T w={50} className="block w-fit">Feedback</T>
        <T w={189} className="block w-fit">(Can be dragged to document area)</T>
      </div>
    </div>
  );
}

/* ---------- status bar ---------- */

function StatusBar() {
  return (
    <div className="flex h-[22px] shrink-0 items-center bg-[#dcdcde] text-[#6b6b6d]">
      <S w={14} h={13} className="ml-[131px]">
        <circle cx="2.500" cy="2.500" r="2.500" fill="#a0a0a2" />
        <path d="M6 1.500h7.500V12H2.500V6" stroke="#a0a0a2" />
        <path d="M5 5.500h3M5 8.500h3M9 5.500h3M9 8.500h3" stroke="#a0a0a2" />
      </S>
      <div className="ml-auto flex h-[22px] w-[37px] items-center justify-center bg-[#c6e0b4]">
        <S w={15} h={14}>
          <path d="M0 0h15v14H0z" fill="currentColor" />
          <path d="M3.500 0v14M11.500 0v14M0 3.500h15M0 10.500h15M3 7h9" stroke="#c6e0b4" />
        </S>
      </div>
      <S w={15} h={14} className="ml-[11px]">
        <path d="M0 0h15v14H0z" fill="currentColor" />
        <path d="M4.500 0v14M9.500 0v14M0 4.500h15M0 9.500h15M12.500 0v14" stroke="#dcdcde" />
      </S>
      <S w={16} h={13} className="ml-[22px]">
        <path d="M0 0h16v13H0z" fill="currentColor" />
        <path d="M1 8.500h10M10.500 3v9" stroke="#dcdcde" strokeWidth="1.400" />
      </S>
      <Caret className="ml-[5px]" />
      <S w={14} h={13} className="ml-[17px]">
        <path d="M0 0h14v13H0z" fill="currentColor" />
        <circle cx="7" cy="5.500" r="2.800" fill="#dcdcde" />
        <path d="M5.500 8h3v3h-3z" fill="#dcdcde" />
      </S>
      <Caret className="ml-[5px]" />
      <T w={31} className="ml-[13px] text-[11.5px] leading-[22px] text-[#505052]">100 %</T>
      <div className="ml-[5px] h-[2px] w-[10px] bg-[#5c5c5e]" />
      <div className="ml-[8px] flex w-[134px] items-center">
        <div className="h-[2px] w-[60px] bg-[#5aa231]" />
        <div className="h-[14px] w-[14px] rounded-full border border-[#8c8c8e] bg-[#f3f3f3]" />
        <div className="h-[2px] w-[60px] bg-[#8f8f96]" />
      </div>
      <S w={10} h={10} className="mr-[6px] ml-[6px]">
        <path d="M5 0v10M0 5h10" stroke="#5c5c5e" strokeWidth="1.600" />
      </S>
    </div>
  );
}

/* ---------- taskbar ---------- */

function Task({ children, state = "" }: { children: ReactNode; state?: string }) {
  return (
    <div className={`flex h-[40px] w-[49px] shrink-0 items-center justify-center ${state}`}>{children}</div>
  );
}

const underline = "border-b-2 border-[#76b9ed]";

function Taskbar() {
  return (
    <div className="flex h-[40px] shrink-0 bg-[#0d0809] text-white">
      <div className="flex w-[48px] items-center justify-center">
        <S w={16} h={16}>
          <path d="M0 2.300L6.500 1.400V7.500H0zM7.500 1.300L16 0v7.500H7.500zM0 8.500h6.500v6.100L0 13.700zM7.500 8.500H16V16l-8.500-1.200z" fill="#fff" />
        </S>
      </div>
      <div className="flex w-[344px] items-center border-t border-[#b5b5b7] bg-[#f2f2f2]">
        <S w={21} h={21} className="ml-[9px]">
          <circle cx="10.500" cy="10.500" r="8.700" stroke="#000" strokeWidth="3" />
        </S>
        <T w={128} className="ml-[10px] text-[14px] text-[#3c3c3e]">Type here to search</T>
        <S w={11} h={17} className="ml-[150px]">
          <rect x="3.500" y=".5" width="4" height="10" rx="1.800" stroke="#222" />
          <path d="M.5 7v3.500q0 2.500 2.500 2.500h5q2.500 0 2.500-2.500V7M5.500 13v3M2.500 16.500h6" stroke="#222" />
        </S>
      </div>
      <Task>
        <S w={20} h={14}>
          <path d="M4.500.5h11v13h-11zM3 2.500H.5v9H3M17 2.500h2.500v9H17" stroke="#fff" />
        </S>
      </Task>
      <div className="ml-[1px] flex">
        <Task>
          <S w={21} h={22}>
            <path d="M0 10Q2 0 11 0q9.500 0 9.500 9v4H7q.5 4.500 6 4.500 3.500 0 6.500-1.800V20q-3 2-8 2Q3 21 3 13.500 3 9 8 6q-5 .5-8 4zM7 9h7.500q0-4-3.500-4-3.500 0-4 4z" fill="#0e7bd8" />
          </S>
        </Task>
        <div className="flex w-[49px] justify-center">
          <div className={`flex w-[40px] items-center justify-center ${underline}`}>
            <S w={22} h={20}>
              <path d="M0 0h8l1.500 2H20v17H0z" fill="#f0c850" />
              <path d="M0 4h22v15H0z" fill="#ffe28a" />
              <path d="M4 20v-8q0-2 2-2h10q2 0 2 2v8h-4v-5H8v5z" fill="#35a5dc" />
            </S>
          </div>
        </div>
        <Task>
          <S w={23} h={24}>
            <path d="M7 7V3q0-2 2-2h5q2 0 2 2v4" stroke="#fff" strokeWidth="1.300" />
            <path d="M0 5h23l-1 18H1z" fill="#fff" />
            <path d="M6 9h5v5H6z" fill="#f25022" />
            <path d="M12 9h5v5h-5z" fill="#7fba00" />
            <path d="M6 15h5v5H6z" fill="#00a4ef" />
            <path d="M12 15h5v5h-5z" fill="#ffb900" />
          </S>
        </Task>
        <Task>
          <S w={24} h={24}>
            <path d="M12 0v24M0 12h24M3 4l18 16M21 4L3 20" stroke="#bcbcbc" strokeWidth="1.200" />
            <path d="M12 2l7 3 3 7-3 7-7 3-7-3-3-7 3-7zM12 7l4 1.500 1.500 3.500-1.500 4-4 1.500-4-1.500L6.500 12 8 8.500z" stroke="#c8c8c8" strokeWidth="1.200" />
            <path d="M4 13l4-4 4 6 3-4 5 1" stroke="#e22222" strokeWidth="2.600" />
          </S>
        </Task>
        <Task>
          <S w={24} h={20}>
            <path d="M0 7L12 0l12 7v13H0z" fill="#fff" />
            <path d="M1 7h22L14 15l-.5-3-3.500-.500z" fill="#111" />
          </S>
        </Task>
        <Task>
          <S w={24} h={24}>
            <circle cx="12" cy="12" r="12" fill="#c4482a" />
            <path d="M9 20l1-10.500M6 6.500h8q4 0 3.500 3.500T13 13.500h-2" stroke="#fff" strokeWidth="3" />
          </S>
        </Task>
        <div className="flex w-[49px] justify-center">
          <div className={`flex w-[40px] items-center justify-center ${underline}`}>
            <S w={23} h={24}>
              <ellipse cx="11.500" cy="12" rx="11.300" ry="12" fill="#e8202c" />
              <path d="M14 1q5 3 5 11t-5 11q9-1 9-11T14 1z" fill="#b01420" />
              <ellipse cx="11.500" cy="12" rx="5" ry="8.500" fill="#0d0809" />
            </S>
          </div>
        </div>
        <Task state={`bg-[#3b3b3d] ${underline}`}>
          <S w={24} h={24}>
            <rect width="24" height="24" rx="4" fill="#13c43e" />
            <path d="M18 7.500H8.500Q6.500 7.500 6.500 9.800T8.500 12h7q2 0 2 2.200t-2 2.300H6" stroke="#fff" strokeWidth="1.900" />
          </S>
        </Task>
      </div>
      <div className="ml-auto flex items-center">
        <S w={15} h={16}>
          <circle cx="9.500" cy="3.500" r="2.800" stroke="#fff" strokeWidth="1.200" />
          <circle cx="4.500" cy="8" r="2.800" stroke="#fff" strokeWidth="1.200" />
          <path d="M1 15.500q0-4.500 3.500-4.500T8 15.500M10 6.500q3.500.5 3.500 4" stroke="#fff" strokeWidth="1.200" />
        </S>
        <S w={12} h={7} className="ml-[22px]">
          <path d="M1 6.500L6 1l5 5.500" stroke="#fff" strokeWidth="1.400" />
        </S>
        <S w={13} h={13} className="ml-[13px]">
          <path d="M1 12.500Q1 2 12.500 1M4 12.500Q4 5 12.500 4M7 12.500Q7 8 12.500 7M10 12.500q0-2.500 2.500-2.500" stroke="#d8d8d8" strokeWidth="1.300" />
        </S>
        <S w={15} h={9} className="ml-[10px]">
          <path d="M.5.500h12v8H.5zM13 3h1.500v3H13" stroke="#fff" />
          <path d="M2 2h3v5H2z" fill="#fff" />
        </S>
        <S w={17} h={14} className="ml-[7px]">
          <path d="M.5 4.500h3L7.500 1v12L3.500 9.500h-3z" stroke="#fff" />
          <path d="M9.500 4.500q2 2.500 0 5M11.500 3q3.500 4 0 8" stroke="#fff" />
          <path d="M13.500 1.500q4 5.500 0 11" stroke="#888" />
        </S>
        <T w={23} className="ml-[10px] text-[12px]">ENG</T>
        <div className="ml-[12px] flex flex-col items-center text-[11.5px]">
          <T w={28} className="leading-[18px]">17:17</T>
          <T w={59} className="leading-[18px]">08-03-2018</T>
        </div>
        <S w={26} h={28} className="ml-[17px]">
          <path d="M1 2h16v13H8v4l-4-4H1z" fill="#fff" />
          <path d="M4 5.500h10M4 8.500h10M4 11.500h7" stroke="#111" />
          <circle cx="16.500" cy="19" r="7.800" fill="#3a3a3c" stroke="#8a8a8c" />
          <text x="13" y="23.500" fontSize="13" fill="#fff" className="font-['Open_Sans',sans-serif]">1</text>
        </S>
        <div className="mr-[4px] ml-[11px] h-[40px] w-px bg-[#555557]" />
      </div>
    </div>
  );
}

export default function App() {
  return (
    <div className="flex h-[768px] w-[1366px] flex-col overflow-hidden bg-[#e2e2e4] font-['Open_Sans',sans-serif]">
      <TitleBar />
      <Ribbon />
      <DocTabs />
      <div className="flex h-[584px] shrink-0">
        <div className="flex w-[1066px] shrink-0 flex-col">
          <FormulaBar />
          <div className="flex h-[533px] shrink-0">
            <Sheet />
            <VerticalScroll />
          </div>
          <SheetTabs />
        </div>
        <SidePanel />
      </div>
      <StatusBar />
      <Taskbar />
    </div>
  );
}
